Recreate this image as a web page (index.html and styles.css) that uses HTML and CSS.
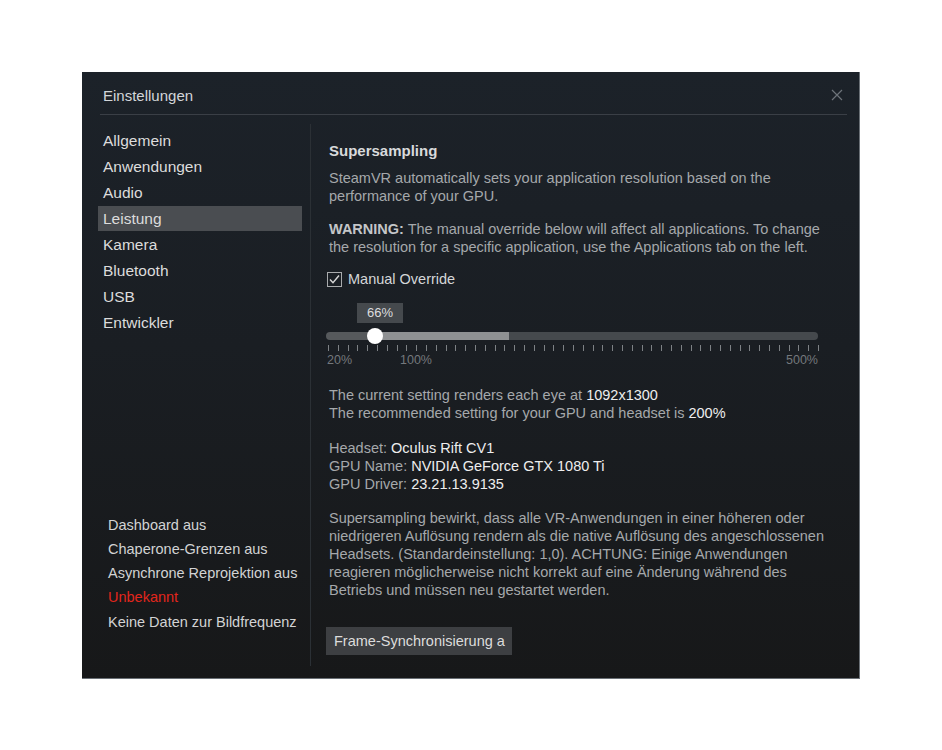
FILE: index.html
```html
<!DOCTYPE html>
<html>
<head>
<meta charset="utf-8">
<link rel="stylesheet" href="styles.css">
</head>
<body>
<div class="dialog">
  <div class="header">
    <span class="title">Einstellungen</span>
    <svg class="close" width="12" height="12" viewBox="0 0 12 12"><path d="M1 1L11 11M11 1L1 11" stroke="#6d7379" stroke-width="1.2" fill="none"/></svg>
  </div>
  <div class="main">
    <div class="sidebar">
      <ul class="nav">
        <li>Allgemein</li>
        <li>Anwendungen</li>
        <li>Audio</li>
        <li class="active">Leistung</li>
        <li>Kamera</li>
        <li>Bluetooth</li>
        <li>USB</li>
        <li>Entwickler</li>
      </ul>
      <ul class="status">
        <li>Dashboard aus</li>
        <li>Chaperone-Grenzen aus</li>
        <li>Asynchrone Reprojektion aus</li>
        <li class="red">Unbekannt</li>
        <li>Keine Daten zur Bildfrequenz</li>
      </ul>
    </div>
    <div class="content">
      <h2 class="heading">Supersampling</h2>
      <p class="p1">SteamVR automatically sets your application resolution based on the performance of your GPU.</p>
      <p class="p2"><span class="warn">WARNING:</span> The manual override below will affect all applications. To change the resolution for a specific application, use the Applications tab on the left.</p>
      <label class="check">
        <svg class="box" width="15" height="15" viewBox="0 0 15 15"><rect x="0.5" y="0.5" width="14" height="14" fill="none" stroke="#a9abad"/><path d="M3 7.5L6 10.8L12 3.5" stroke="#d8d8d8" stroke-width="1.4" fill="none"/></svg>
        <span>Manual Override</span>
      </label>
      <div class="slider">
        <div class="badge">66%</div>
        <div class="track"><div class="thumb"></div></div>
        <div class="ticks"></div>
        <div class="labels"><span class="l20">20%</span><span class="l100">100%</span><span class="l500">500%</span></div>
      </div>
      <p class="info1">The current setting renders each eye at <em>1092x1300</em><br>The recommended setting for your GPU and headset is <em>200%</em></p>
      <p class="info2">Headset: <em>Oculus Rift CV1</em><br>GPU Name: <em>NVIDIA GeForce GTX 1080 Ti</em><br>GPU Driver: <em>23.21.13.9135</em></p>
      <p class="desc">Supersampling bewirkt, dass alle VR-Anwendungen in einer höheren oder niedrigeren Auflösung rendern als die native Auflösung des angeschlossenen Headsets. (Standardeinstellung: 1,0). ACHTUNG: Einige Anwendungen reagieren möglicherweise nicht korrekt auf eine Änderung während des Betriebs und müssen neu gestartet werden.</p>
      <button class="btn">Frame-Synchronisierung a</button>
    </div>
  </div>
</div>
</body>
</html>
```
FILE: styles.css
```css
html, body {
  margin: 0;
  padding: 0;
  background: #ffffff;
}
body {
  font-family: "Liberation Sans", Arial, sans-serif;
}
.dialog {
  margin: 72px 0 0 82px;
  width: 778px;
  height: 607px;
  box-sizing: border-box;
  background: linear-gradient(to bottom, #1c2229 0%, #1a1e23 45%, #171819 100%);
  border-right: 1px solid #6a7076;
  border-bottom: 1px solid #6a7076;
  display: flex;
  flex-direction: column;
}
.header {
  height: 43px;
  margin: 0 12px 0 18px;
  padding-left: 3px;
  padding-right: 4px;
  border-bottom: 1px solid #3a3f46;
  display: flex;
  align-items: center;
  justify-content: space-between;
  padding-top: 5px;
  box-sizing: border-box;
}
.title {
  color: #d3d6d9;
  font-size: 15px;
}
.close {
  display: block;
  margin-top: -2px;
}
.main {
  flex: 1;
  display: flex;
  padding: 9px 0 12px 0;
}
.sidebar {
  width: 228px;
  border-right: 1px solid #2b3035;
  display: flex;
  flex-direction: column;
  justify-content: space-between;
}
ul {
  list-style: none;
  margin: 0;
  padding: 0;
}
.nav {
  margin: 4px 0 0 16px;
  width: 204px;
}
.nav li {
  height: 26px;
  line-height: 26px;
  padding-left: 5px;
  font-size: 15.5px;
  color: #dcdcdc;
}
.nav li.active {
  background: #4a4d51;
  height: 25px;
  line-height: 25px;
  margin-bottom: 1px;
}
.status {
  padding-left: 26px;
  margin-bottom: 32px;
}
.status li {
  height: 24.3px;
  line-height: 24px;
  font-size: 14.5px;
  color: #d2d3d4;
}
.status li.red {
  color: #e2261c;
}
.content {
  flex: 1;
  padding: 17px 0 0 18px;
  color: #a5a8ab;
  font-size: 14.5px;
  line-height: 18px;
}
.heading {
  margin: 0;
  font-size: 15px;
  line-height: 20px;
  font-weight: bold;
  color: #d8dadc;
}
p {
  margin: 0;
  width: 500px;
}
.p1 {
  margin-top: 8px;
}
.p2 {
  margin-top: 15px;
}
.warn {
  font-weight: bold;
  color: #c4c6c8;
}
em {
  font-style: normal;
  color: #eeeeee;
}
.check {
  margin-top: 14px;
  display: flex;
  align-items: center;
  gap: 6px;
  color: #d4d6d8;
  height: 18px;
  margin-left: -2px;
}
.box {
  display: block;
}
.slider {
  margin-top: 15px;
  margin-left: -3px;
  width: 492px;
}
.badge {
  margin-left: 31px;
  width: 46px;
  height: 20px;
  line-height: 20px;
  text-align: center;
  background: #45494d;
  color: #dcdddf;
  font-size: 13px;
}
.track {
  position: relative;
  margin-top: 9px;
  height: 8px;
  border-radius: 4px;
  background: linear-gradient(to right, #56595c 0, #56595c 49px, #8f9193 49px, #8f9193 183px, #45494d 183px, #45494d 100%);
}
.thumb {
  position: absolute;
  left: 41px;
  top: -4px;
  width: 16px;
  height: 16px;
  border-radius: 50%;
  background: #ffffff;
}
.ticks {
  margin: 5px 0 0 2px;
  width: 491px;
  height: 6px;
  background: repeating-linear-gradient(to right, #7d8185 0, #7d8185 1px, transparent 1px, transparent 9.8px);
}
.labels {
  position: relative;
  height: 16px;
  font-size: 12.5px;
  line-height: 16px;
  color: #74787c;
  margin-top: 1px;
}
.labels span {
  position: absolute;
  top: 0;
}
.l20 { left: 1px; }
.l100 { left: 74px; }
.l500 { right: 0; }
.info1 {
  margin-top: 18px;
}
.info2 {
  margin-top: 17px;
}
.desc {
  margin-top: 16px;
}
.btn {
  margin-top: 28px;
  margin-left: -3px;
  height: 28px;
  width: 186px;
  padding: 0 0 0 8px;
  text-align: left;
  border: none;
  background: #3d3f42;
  color: #dcdcdc;
  font-family: "Liberation Sans", Arial, sans-serif;
  font-size: 14.5px;
  white-space: nowrap;
  overflow: hidden;
}
```
